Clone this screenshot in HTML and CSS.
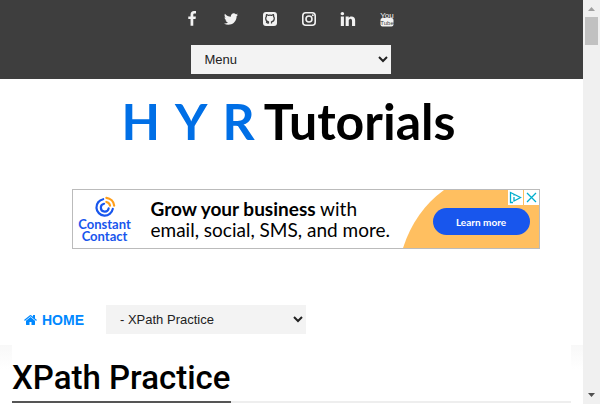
FILE: index.html
```html
<!DOCTYPE html>
<html lang="en">
<head>
<meta charset="utf-8">
<title>XPath Practice - H Y R Tutorials</title>
<link rel="stylesheet" href="styles.css">
</head>
<body>
<div class="page">
  <header class="topbar">
    <nav class="social" aria-label="Social links">
      <a href="#" aria-label="Facebook"><svg viewBox="0 0 1792 1792"><path d="M1343 12v264h-157q-86 0-116 36t-30 108v189h293l-39 296h-254v759h-306v-759h-255v-296h255v-218q0-186 104-288.5t277-102.5q147 0 228 12z"/></svg></a>
      <a href="#" aria-label="Twitter"><svg viewBox="0 0 1792 1792"><path d="M1684 408q-67 98-162 167 1 14 1 42 0 130-38 259.5t-115.5 248.500-184.500 210.500-258 146-323 54.500q-271 0-496-145 35 4 78 4 225 0 401-138-105-2-188-64.500t-114-159.500q33 5 61 5 43 0 85-11-112-23-185.500-111.500t-73.500-205.500v-4q68 38 146 41-66-44-105-115t-39-154q0-88 44-163 121 149 294.500 238.500t371.500 99.500q-8-38-8-74 0-134 94.500-228.500t228.500-94.500q140 0 236 102 109-21 205-78-37 115-142 178 93-10 186-50z"/></svg></a>
      <a href="#" aria-label="GitHub"><svg viewBox="0 0 16 16"><rect x="1" y="1" width="14" height="14" rx="3"/><path class="cat" d="M6.500 12.500v-1.600C4.600 10.500 3.700 9.400 3.700 7.500c0-.8.200-1.400.7-2-.2-.6-.1-1.200.1-1.800.7 0 1.300.3 1.900.7a6 6 0 0 1 3.200 0c.6-.4 1.200-.7 1.900-.7.200.6.300 1.200.1 1.800.5.600.7 1.200.7 2 0 1.900-.9 3-2.800 3.400v1.600M6.300 12.200c-1.300.2-1.300-.8-2.300-1.200"/></svg></a>
      <a href="#" aria-label="Instagram"><svg viewBox="0 0 16 16"><g fill="none" stroke="#f2f2f2" stroke-width="1.600"><rect x="1.800" y="1.800" width="12.400" height="12.400" rx="3"/><circle cx="8" cy="8" r="3"/></g><circle cx="11.800" cy="4.200" r="1"/></svg></a>
      <a href="#" aria-label="LinkedIn"><svg viewBox="-50 110 1692 1692"><path d="M365 702v991h-330v-991h330zm21-306q1 73-50.500 122t-135.500 49h-2q-82 0-132-49t-50-122q0-74 51.500-122.500t134.500-48.500 133 48.500 51 122.500zm1166 729v568h-329v-530q0-105-40.500-164.500t-126.500-59.500q-63 0-105.500 34.500t-63.500 85.500q-11 30-11 81v553h-329q2-399 2-647t-1-296l-1-48h329v144h-2q20-32 41-56t56.500-52 87-43.500 114.500-15.500q171 0 275 113.500t104 332.500z"/></svg></a>
      <a href="#" aria-label="YouTube"><svg viewBox="0 0 16 16"><text x="8" y="6.500" text-anchor="middle" font-size="8">You</text><rect x="1.500" y="7" width="13" height="8.500" rx="2"/><text class="tube" x="8" y="14" text-anchor="middle" font-size="6">Tube</text></svg></a>
    </nav>
    <select class="picker" aria-label="Menu"><option>Menu</option></select>
  </header>

  <a class="logo" href="#"><span class="initials"><span>H</span> <span>Y</span> <span>R</span></span> <span>Tutorials</span></a>

  <section class="ad" aria-label="Advertisement">
    <div class="brand">
      <svg viewBox="0 0 24 24" fill="none" stroke="#1856ed" stroke-width="2.400" stroke-linecap="round"><path d="M10 3.500a9 9 0 1 0 10.500 10.500"/><path d="M11 8.500a4.300 4.300 0 1 0 5 5"/><path stroke="#ff9e1a" d="M13.500 2a9.500 9.500 0 0 1 8.500 8.500M13.500 6.500a5 5 0 0 1 4 4"/></svg>
      <span>Constant<br>Contact</span>
    </div>
    <p class="pitch"><strong>Grow your business</strong> with<br>email, social, SMS, and more.</p>
    <div class="cta">
      <svg class="curve" viewBox="0 0 136 58" preserveAspectRatio="none"><path d="M0 58Q12 21 41 0h95v58z" fill="#ffbf60"/></svg>
      <button class="learn">Learn more</button>
    </div>
    <div class="choices">
      <button aria-label="Ad choices"><svg viewBox="0 0 15 15"><path d="M5 12.500H2.500v-10L12.500 7.500 6 11V7M6 4.500v1"/></svg></button>
      <button aria-label="Close ad"><svg viewBox="0 0 15 15"><path d="M3 3l9 9M12 3l-9 9"/></svg></button>
    </div>
  </section>

  <nav class="subnav">
    <a class="home" href="#"><svg viewBox="64 128 1664 1536"><path d="M1472 992v480q0 26-19 45t-45 19h-384v-384h-256v384h-384q-26 0-45-19t-19-45v-480q0-1 .5-3t.5-3l575-474 575 474q1 2 1 6zm223-69l-62 74q-8 9-21 11h-3q-13 0-21-7l-692-577-692 577q-12 8-24 7-13-2-21-11l-62-74q-8-10-7-23.500t11-21.500l719-599q32-26 76-26t76 26l244 204v-195q0-14 9-23t23-9h192q14 0 23 9t9 23v408l219 182q10 8 11 21.500t-7 23.500z"/></svg>HOME</a>
    <select class="picker" aria-label="Section"><option>- XPath Practice</option></select>
  </nav>

  <main class="content">
    <div class="sheet"><div class="title"><h1>XPath Practice</h1></div></div>
  </main>
</div>
<div class="scrollbar" aria-hidden="true">
  <svg class="up" viewBox="0 0 7 4"><path d="M0 4L3.500 0 7 4z"/></svg>
  <div class="thumb"></div>
  <svg class="down" viewBox="0 0 7 4"><path d="M0 0l3.500 4L7 0z"/></svg>
</div>
</body>
</html>
```
FILE: styles.css
```css
* { box-sizing: border-box; }
body {
  margin: 0;
  display: flex;
  height: 100vh;
  overflow: hidden;
  background: #fff;
  color: #000;
  font-family: "Liberation Sans", sans-serif;
}
a { color: inherit; text-decoration: none; }
button { border: 0; padding: 0; cursor: pointer; }
.page { flex: 1; min-width: 0; }
.topbar {
  display: flex;
  flex-direction: column;
  align-items: center;
  gap: 8px;
  padding: 1px 2px 5px 0;
  background: #3e3e3e;
}
.social { display: flex; gap: 23px; padding-right: 2px; }
.social a { display: flex; align-items: center; height: 36px; }
.social svg { width: 16px; height: 16px; fill: #f2f2f2; }
.social .tube { fill: #3e3e3e; }
.social .cat { fill: none; stroke: #3e3e3e; stroke-width: 1.2; }
.picker {
  width: 200px;
  height: 29px;
  padding: 0 0 0 10px;
  border: 0;
  border-radius: 0;
  background: #f3f3f3;
  color: #222;
  font: 13px "Liberation Sans", sans-serif;
}
.logo {
  display: flex;
  justify-content: center;
  gap: 9px;
  padding: 14px 6px 1px 0;
  font: bold 50px/56px Lato, sans-serif;
}
.initials { display: flex; gap: 15px; color: #006fe6; }
.ad {
  position: relative;
  display: flex;
  width: 468px;
  max-width: 100%;
  height: 60px;
  margin: 39px auto 0;
  left: 14px;
  border: 1px solid #bbb;
}
.brand {
  display: flex;
  flex-direction: column;
  align-items: center;
  width: 64px;
  padding-top: 6px;
  color: #1856ed;
  font: bold 13px/12px Lato, sans-serif;
  text-align: center;
}
.brand svg { width: 22px; height: 22px; }
.pitch {
  flex: 1;
  margin: 0;
  padding: 8px 0 0 14px;
  font: 19px/21px Lato, sans-serif;
  white-space: nowrap;
}
.cta {
  position: relative;
  display: flex;
  align-items: center;
  width: 136px;
  padding: 5px 0 0 30px;
}
.curve { position: absolute; inset: 0; width: 100%; height: 100%; }
.learn {
  position: relative;
  width: 97px;
  height: 27px;
  border-radius: 14px;
  background: #1856ed;
  color: #fff;
  font: bold 10px Lato, sans-serif;
}
.choices { position: absolute; top: 0; right: 0; display: flex; gap: 1px; }
.choices button { display: flex; background: #fff; }
.choices svg { width: 15px; height: 15px; fill: none; stroke: #00aecd; stroke-width: 1.3; }
.subnav {
  display: flex;
  align-items: center;
  gap: 22px;
  padding: 56px 24px 11px;
}
.home {
  display: flex;
  align-items: center;
  gap: 5px;
  color: #0088ff;
  font-size: 14px;
  font-weight: bold;
}
.home svg { width: 13px; height: 12px; fill: #0088ff; }
.content {
  padding: 0 12px;
  background: linear-gradient(#f8f8f8, #fff 24px);
}
.sheet { background: #fff; padding-top: 12px; }
.title { border-bottom: 2px solid #eee; }
h1 {
  width: fit-content;
  margin: 0 0 -2px;
  padding-bottom: 2px;
  border-bottom: 2px solid #555;
  font: 500 33px/42px Roboto, sans-serif;
}
.scrollbar {
  display: flex;
  flex-direction: column;
  align-items: center;
  width: 17px;
  padding: 7px 0;
  background: #f0f0f0;
}
.scrollbar svg { width: 7px; height: 4px; }
.up { fill: #a0a0a0; }
.down { margin-top: auto; fill: #505050; }
.thumb { width: 13px; height: 28px; margin-top: 6px; background: #c1c1c1; }
```
